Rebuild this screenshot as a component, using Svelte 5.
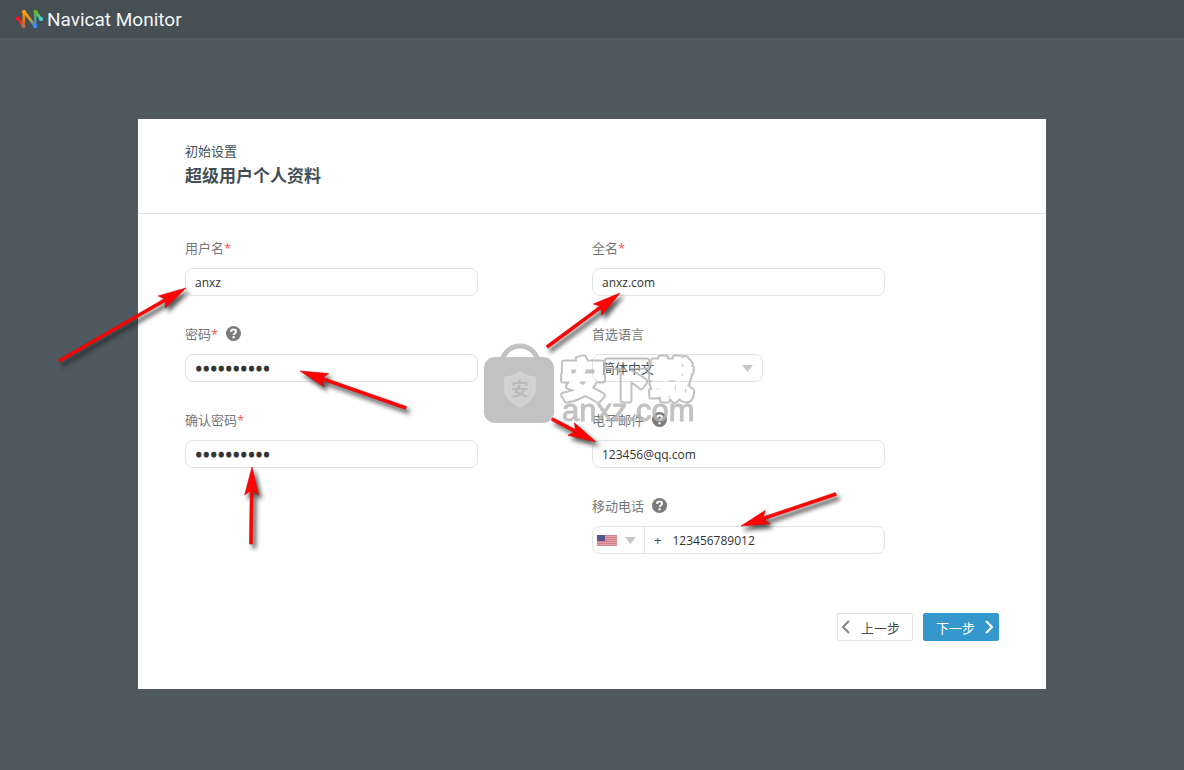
<script>
    let username = $state("anxz");
    let fullName = $state("anxz.com");
    let password = $state("anxz123456");
    let confirm = $state("anxz123456");
    let language = $state("zh-CN");
    let email = $state("123456@qq.com");
    let country = $state("us");
    let phone = $state("123456789012");

    // tail x, tail y, tip x, tip y
    const arrows = [
        [59, 361, 186, 288],
        [547, 347, 620, 293],
        [406, 408, 300, 371],
        [552, 419, 596, 442],
        [251, 544, 252, 467],
        [836, 494, 741, 526],
    ].map(([x1, y1, x2, y2]) => ({
        x: x2,
        y: y2,
        length: Math.hypot(x2 - x1, y2 - y1),
        angle: (Math.atan2(y2 - y1, x2 - x1) * 180) / Math.PI,
    }));
</script>

{#snippet help(label)}
    <button type="button" class="help" aria-label={label}>
        <svg width="16" height="16" viewBox="0 0 16 16">
            <circle cx="7.5" cy="7.5" r="7.5" fill="#7b7b7b" />
            <path d="M5 5.900C5.100 4.200 6.100 3.500 7.500 3.500c1.500 0 2.500.8 2.500 2.100 0 1.900-2.400 1.800-2.400 3.500" fill="none" stroke="#fff" stroke-width="2" />
            <rect x="6.500" y="10.200" width="2.200" height="2.100" fill="#fff" />
        </svg>
    </button>
{/snippet}

<header class="topbar">
    <svg class="logo" width="28" height="20" viewBox="0 0 28 20" fill="none" stroke-width="2.8" stroke-linecap="round">
        <defs>
            <linearGradient id="l1" gradientUnits="userSpaceOnUse" x1="3" y1="10" x2="8" y2="17"><stop stop-color="#f5152d" /><stop offset="1" stop-color="#c85a28" /></linearGradient>
            <linearGradient id="l2" gradientUnits="userSpaceOnUse" x1="8" y1="17" x2="9" y2="3"><stop stop-color="#c8601f" /><stop offset="1" stop-color="#ff9a12" /></linearGradient>
            <linearGradient id="l3" gradientUnits="userSpaceOnUse" x1="9" y1="3" x2="20" y2="17"><stop stop-color="#ff9a12" /><stop offset=".5" stop-color="#d5a41c" /><stop offset="1" stop-color="#2d83f2" /></linearGradient>
            <linearGradient id="l4" gradientUnits="userSpaceOnUse" x1="20" y1="17" x2="21" y2="3"><stop stop-color="#2d83f2" /><stop offset="1" stop-color="#66b52b" /></linearGradient>
            <linearGradient id="l5" gradientUnits="userSpaceOnUse" x1="21" y1="3" x2="26" y2="10"><stop stop-color="#66b52b" /><stop offset="1" stop-color="#43d3cf" /></linearGradient>
        </defs>
        <path d="M3 9.500l5.500 7.500" stroke="url(#l1)" />
        <path d="M20 17l.6-14.500" stroke="url(#l4)" />
        <path d="M20.500 2.500l5.500 7.500" stroke="url(#l5)" />
        <path d="M9.200 2.500L20 17" stroke="url(#l3)" />
        <path d="M8.500 17l.6-14.500" stroke="url(#l2)" />
        <g stroke="none">
            <circle cx="3" cy="9.500" r="2.200" fill="#f5152d" />
            <circle cx="8.500" cy="17" r="2.100" fill="#b9744b" />
            <circle cx="9" cy="3" r="2.100" fill="#ff9a12" />
            <circle cx="20" cy="17" r="2.300" fill="#3a8cf5" />
            <circle cx="20.500" cy="3" r="2.100" fill="#66b52b" />
            <circle cx="26" cy="10" r="2.100" fill="#43d3cf" />
        </g>
    </svg>
    <span>Navicat Monitor</span>
</header>

<main class="card">
    <div class="heading">
        <p>初始设置</p>
        <h1>超级用户个人资料</h1>
    </div>

    <form onsubmit={(e) => e.preventDefault()}>
        <div class="columns">
            <div class="column">
                <div class="field">
                    <div class="label"><label for="username">用户名<em>*</em></label></div>
                    <input id="username" class="box" type="text" bind:value={username} />
                </div>
                <div class="field">
                    <div class="label"><label for="password">密码<em>*</em></label>{@render help("密码")}</div>
                    <input id="password" class="box" type="password" bind:value={password} />
                </div>
                <div class="field">
                    <div class="label"><label for="confirm">确认密码<em>*</em></label></div>
                    <input id="confirm" class="box" type="password" bind:value={confirm} />
                </div>
            </div>

            <div class="column">
                <div class="field">
                    <div class="label"><label for="fullname">全名<em>*</em></label></div>
                    <input id="fullname" class="box" type="text" bind:value={fullName} />
                </div>
                <div class="field">
                    <div class="label"><label for="language">首选语言</label></div>
                    <div class="box language">
                        <select id="language" bind:value={language}>
                            <option value="zh-CN">简体中文</option>
                            <option value="en">English</option>
                        </select>
                        <svg class="caret" width="11" height="7" viewBox="0 0 11 7"><path d="M0 0h11L5.500 7z" /></svg>
                    </div>
                </div>
                <div class="field">
                    <div class="label"><label for="email">电子邮件</label>{@render help("电子邮件")}</div>
                    <input id="email" class="box" type="email" bind:value={email} />
                </div>
                <div class="field">
                    <div class="label"><label for="phone">移动电话</label>{@render help("移动电话")}</div>
                    <div class="box phone">
                        <div class="country">
                            <svg width="20" height="11" viewBox="0 0 20 11">
                                <rect width="20" height="11" fill="#dfa0a7" />
                                <path d="M0 .5h20M0 2.500h20M0 4.500h20M0 6.500h20M0 8.500h20M0 10.500h20" stroke="#d5808a" />
                                <rect width="8" height="6" fill="#53558c" />
                            </svg>
                            <svg class="caret" width="11" height="7" viewBox="0 0 11 7"><path d="M0 0h11L5.500 7z" /></svg>
                            <select aria-label="国家" bind:value={country}>
                                <option value="us">US</option>
                                <option value="cn">CN</option>
                            </select>
                        </div>
                        <span>+</span>
                        <input id="phone" type="tel" bind:value={phone} />
                    </div>
                </div>
            </div>
        </div>

        <div class="actions">
            <button type="button" class="prev">
                <svg width="9" height="14" viewBox="0 0 9 14"><path d="M8 1L2 7l6 6" /></svg>
                <span>上一步</span>
            </button>
            <button type="submit" class="next">
                <span>下一步</span>
                <svg width="9" height="14" viewBox="0 0 9 14"><path d="M1 1l6 6-6 6" /></svg>
            </button>
        </div>
    </form>

    <svg class="overlay" width="908" height="570" viewBox="138 119 908 570" aria-hidden="true">
        <defs>
            <filter id="shadow" x="-20%" y="-50%" width="150%" height="220%" filterUnits="objectBoundingBox">
                <feGaussianBlur stdDeviation="2" />
            </filter>
            <mask id="hollow" maskUnits="userSpaceOnUse" x="540" y="340" width="180" height="90">
                <rect x="540" y="340" width="180" height="90" fill="#fff" />
                <text class="mark inner" x="561" y="396">安下载</text>
            </mask>
        </defs>

        <g opacity=".8">
            <path d="M502 361c2-9 9-15 18-15s16 6 18 15" fill="none" stroke="#b3b3b3" stroke-width="5" />
            <rect x="484" y="357" width="70" height="66" rx="11" fill="#b3b3b3" />
            <path d="M520 372c5 3 10 5 15 5v12c0 9-7 14-15 18-8-4-15-9-15-18v-12c5 0 10-2 15-5z" fill="#c6c6c6" stroke="#d2d2d2" />
            <text class="shield" x="520" y="396" text-anchor="middle">安</text>
            <text class="mark outer" x="561" y="396" mask="url(#hollow)">安下载</text>
            <text class="site" x="562" y="421">anxz.com</text>
        </g>

        {#each arrows as a}
            {@const d = `M0 0L-28 -7L-24 -1.500H${-a.length}V1.500H-24L-28 7Z`}
            <g transform="translate(3 4)" opacity=".75">
                <path transform="translate({a.x} {a.y}) rotate({a.angle})" {d} fill="#222" stroke="#222" filter="url(#shadow)" />
            </g>
            <path transform="translate({a.x} {a.y}) rotate({a.angle})" {d} fill="#fd0303" stroke="#e00808" stroke-width=".6" />
        {/each}
    </svg>
</main>

<style>
    :global(body) {
        background: #4e5a5f;
        font-family: "Open Sans", "Noto Sans CJK SC", sans-serif;
        font-size: 13px;
        color: #444f55;
    }

    .topbar {
        display: flex;
        align-items: center;
        gap: 4px;
        height: 38px;
        padding: 0 15px;
        background: #454f54;
        color: #f4f5f5;
        font-family: Roboto, sans-serif;
        font-size: 19px;
    }

    .card {
        position: relative;
        box-sizing: border-box;
        max-width: 908px;
        margin: 81px auto;
        background: #fff;
    }

    .heading {
        padding: 22px 47px 23px;
        border-bottom: 1px solid #e2e3e4;
    }
    .heading p {
        margin: 0;
        line-height: 20px;
    }
    h1 {
        margin: 0;
        font-size: 17px;
        line-height: 29px;
    }

    form {
        padding: 24px 47px 48px;
    }
    .columns {
        display: grid;
        grid-template-columns: 1fr 1fr;
    }
    .column {
        display: flex;
        flex-direction: column;
        gap: 28px;
    }

    .label {
        display: flex;
        align-items: center;
        gap: 8px;
        height: 20px;
        margin-bottom: 10px;
        line-height: 20px;
        color: #777;
    }
    em {
        font-style: normal;
        color: #f7574c;
    }
    .help {
        display: flex;
        padding: 0;
        border: 0;
        background: none;
    }

    .box {
        display: block;
        box-sizing: border-box;
        width: 100%;
        max-width: 293px;
        height: 28px;
        border: 1px solid #e1e2e3;
        border-radius: 8px;
        background: #fff;
    }
    input {
        padding: 0 9px;
        font: 12px "Open Sans", sans-serif;
        color: #333;
        outline: none;
    }
    input[type="password"] {
        font-size: 20px;
        -webkit-text-stroke: 1px #333;
    }

    select {
        appearance: none;
        border: 0;
        background: none;
        font: inherit;
        color: inherit;
        outline: none;
    }
    .caret {
        fill: #c6c6c6;
        pointer-events: none;
    }
    .language {
        display: flex;
        align-items: center;
        max-width: 171px;
        padding-right: 9px;
    }
    .language select {
        flex: 1;
        height: 100%;
        padding: 0 9px;
    }

    .phone {
        display: flex;
        align-items: center;
    }
    .country {
        position: relative;
        display: flex;
        align-items: center;
        gap: 8px;
        box-sizing: border-box;
        width: 52px;
        height: 100%;
        padding-left: 4px;
        border-right: 1px solid #e1e2e3;
    }
    .country select {
        position: absolute;
        inset: 0;
        width: 100%;
        opacity: 0;
    }
    .phone span {
        padding-left: 9px;
    }
    .phone input {
        flex: 1;
        min-width: 0;
        padding: 0 11px;
        border: 0;
        background: none;
    }

    .actions {
        display: flex;
        justify-content: flex-end;
        gap: 10px;
        margin-top: 59px;
    }
    .actions button {
        display: flex;
        align-items: center;
        justify-content: space-between;
        box-sizing: border-box;
        width: 76px;
        height: 28px;
        border: 1px solid #e1e2e3;
        border-radius: 2px;
        background: #fff;
        font: inherit;
        color: #444f55;
    }
    .actions path {
        fill: none;
        stroke: #858585;
        stroke-width: 2;
    }
    .actions .prev {
        padding: 0 12px 0 3px;
    }
    .actions .next {
        padding: 0 4px 0 12px;
        border-color: #3498cc;
        background: #3498cc;
        color: #fff;
    }
    .actions .next path {
        stroke: #fff;
    }

    .overlay {
        position: absolute;
        top: 0;
        left: 0;
        overflow: visible;
        pointer-events: none;
    }
    .mark {
        font: bold 44px "Noto Sans CJK SC", sans-serif;
        stroke-linejoin: round;
    }
    .outer {
        fill: #b3b3b3;
        stroke: #b3b3b3;
        stroke-width: 7px;
    }
    .inner {
        fill: #000;
        stroke: #000;
        stroke-width: 3px;
    }
    .shield {
        font: bold 18px "Noto Sans CJK SC", sans-serif;
        fill: #aaa;
    }
    .site {
        font: 31px "Liberation Sans", sans-serif;
        fill: #b3b3b3;
        stroke: #b3b3b3;
    }
</style>
